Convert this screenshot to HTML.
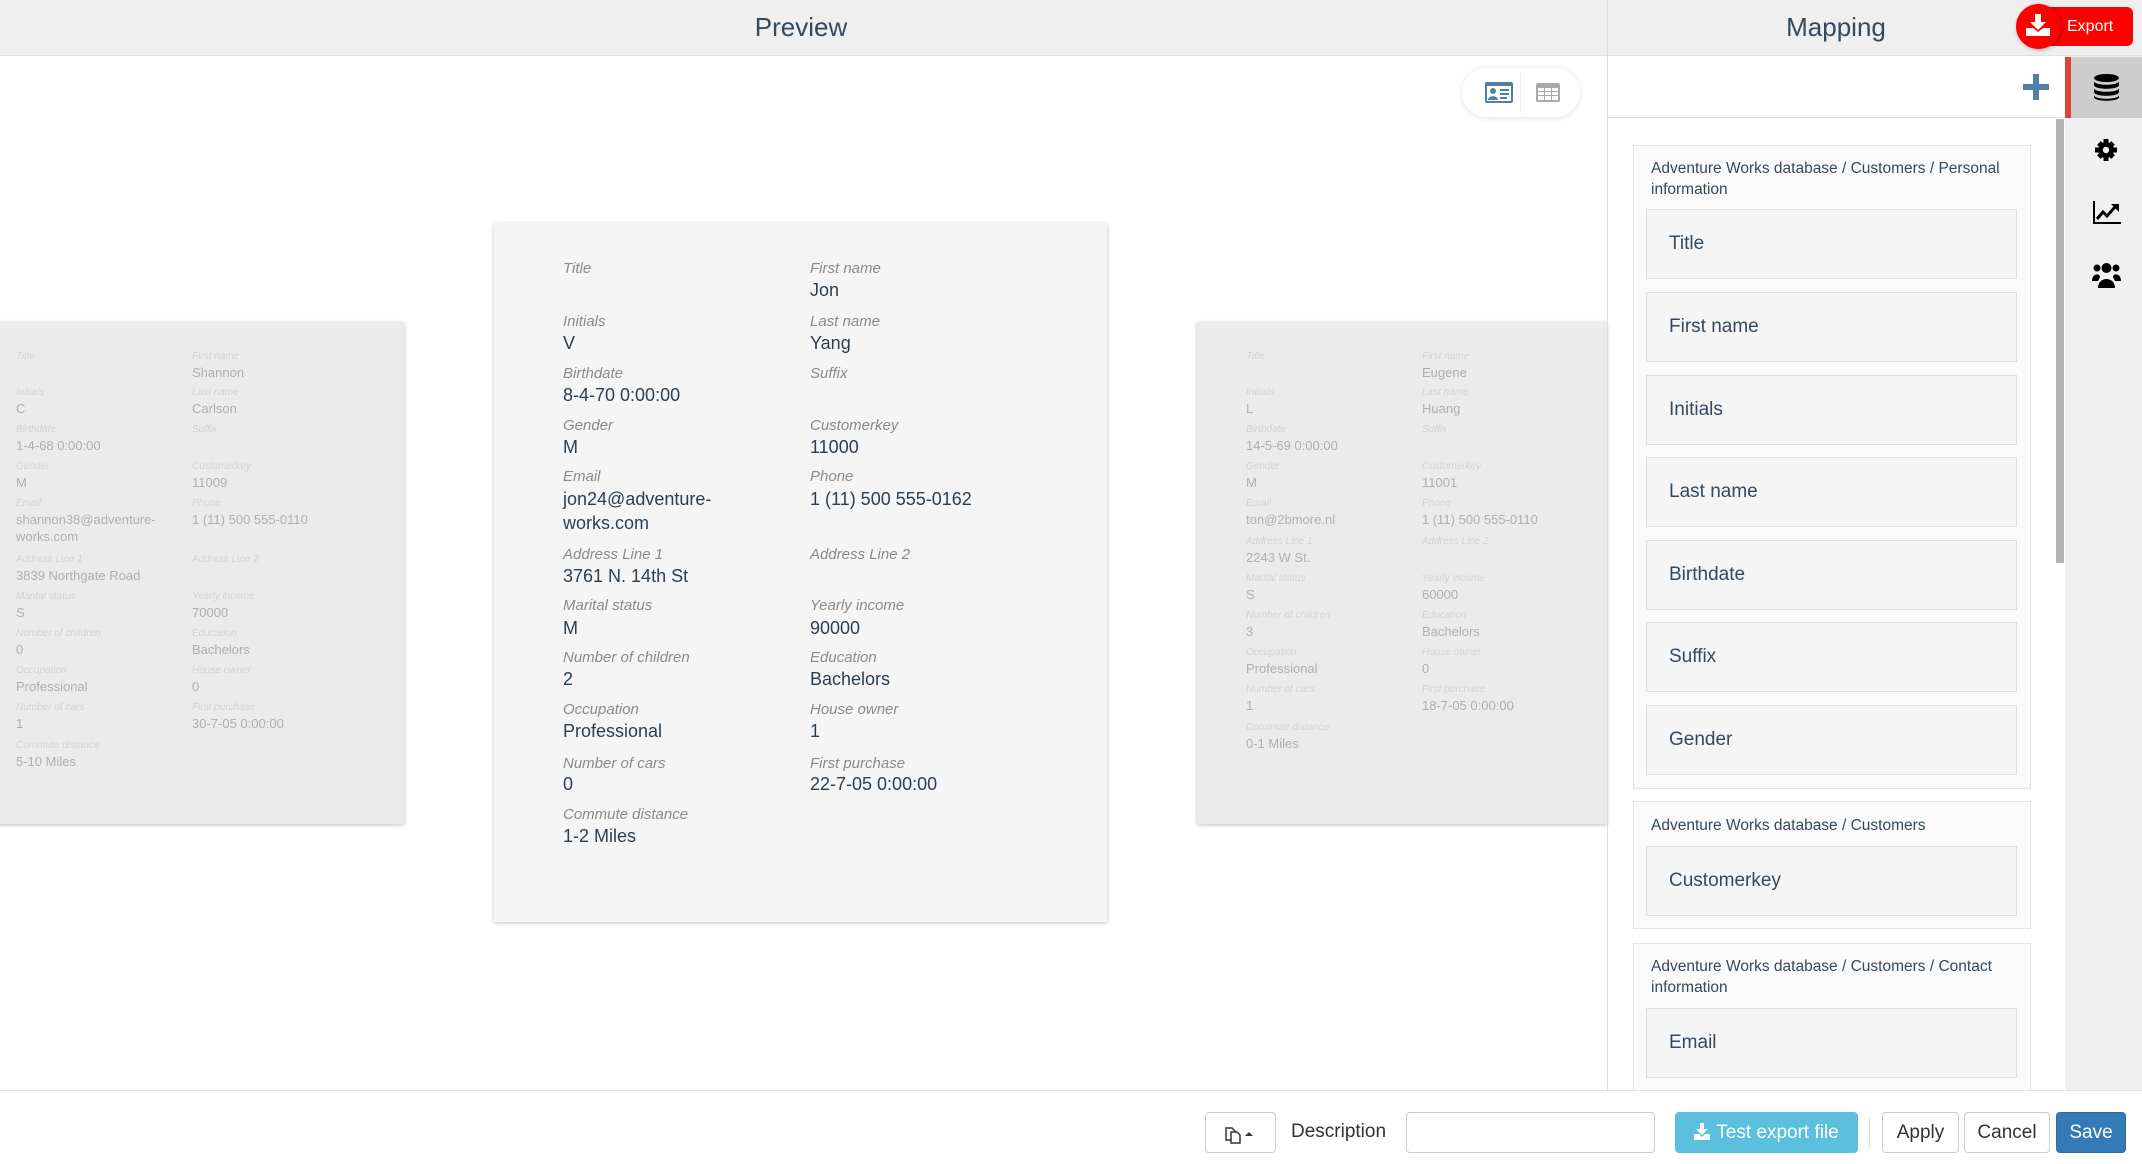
<!DOCTYPE html>
<html><head><meta charset="utf-8"><style>
*{box-sizing:border-box;margin:0;padding:0}
body{width:2142px;height:1164px;position:relative;overflow:hidden;background:#fff;font-family:"Liberation Sans",sans-serif;color:#2c3e50}
.a{position:absolute;white-space:nowrap}
.hdr{position:absolute;top:0;height:56px;background:#efefef;border-bottom:1px solid #e0e0e0}
.ttl{position:absolute;top:12px;font-size:26px;color:#34495e;transform:translateX(-50%)}
.card{position:absolute;background:#f5f5f5;box-shadow:0 1px 4px rgba(0,0,0,.25)}
.l{position:absolute;font-style:italic;font-size:15px;color:#8a8a8a;line-height:18px;white-space:nowrap}
.v{position:absolute;font-size:18px;color:#2c3e50;line-height:24px;white-space:nowrap}
.side{background:#ebebeb}
.sl{position:absolute;font-style:italic;font-size:10px;color:#d2d2d2;line-height:12px;white-space:nowrap}
.sv{position:absolute;font-size:13px;color:#aeaeae;line-height:17px;white-space:nowrap}
.grp{position:absolute;left:1633px;width:398px;background:#fafafa;border:1px solid #e3e3e3}
.gt{position:absolute;left:17px;font-size:15.5px;color:#34495e;line-height:21px;width:370px;white-space:normal}
.fld{position:absolute;left:1646px;width:371px;height:70px;background:#f5f5f5;border:1px solid #dedede;font-size:19px;color:#34495e;line-height:68px;padding-left:22px}
.btn{position:absolute;top:1112px;height:41px;border:1px solid #ccc;border-radius:4px;background:#fff;font-size:19px;line-height:39px;text-align:center;color:#333}
</style></head><body>
<div class="hdr" style="left:0;width:1607px"></div>
<div class="hdr" style="left:1607px;width:535px;border-left:1px solid #ddd"></div>
<div class="ttl" style="left:801px">Preview</div>
<div class="ttl" style="left:1836px">Mapping</div>
<div class="a" style="left:2030px;top:7px;width:103px;height:39px;background:#ff0000;border-radius:6px"></div>
<div class="a" style="left:2067px;top:17px;color:#fff;font-size:16px;line-height:20px">Export</div>
<div class="a" style="left:2016px;top:4px;width:45px;height:45px;border-radius:50%;background:#ff0000;box-shadow:1px 1px 4px rgba(0,0,0,.3)"></div>
<svg class="a" style="left:2026px;top:14px" width="24" height="22" viewBox="0 0 24 22"><path d="M9 0h6v8h5l-8 8-8-8h5z" fill="#fff"/><path d="M0 14h7l5 4 5-4h7v8H0z" fill="#fff"/></svg>

<div class="a" style="left:1462px;top:68px;width:118px;height:49px;background:#fff;border-radius:25px;box-shadow:0 1px 6px rgba(0,0,0,.12)"></div>
<div class="a" style="left:1520px;top:72px;width:1px;height:41px;background:#eee"></div>
<svg class="a" style="left:1485px;top:82px" width="28" height="21" viewBox="0 0 28 21"><rect x="0" y="0" width="28" height="21" rx="2" fill="#4f7ea6"/><rect x="2" y="4" width="24" height="15" fill="#fff"/><circle cx="8" cy="9" r="3" fill="#4f7ea6"/><path d="M3 18c0-5 10-5 10 0z" fill="#4f7ea6"/><rect x="15" y="7" width="9" height="2" fill="#4f7ea6"/><rect x="15" y="11" width="9" height="2" fill="#4f7ea6"/><rect x="15" y="15" width="7" height="2" fill="#4f7ea6"/></svg>
<svg class="a" style="left:1536px;top:83px" width="24" height="19" viewBox="0 0 24 19"><rect width="24" height="19" rx="2" fill="#aaa"/><g fill="#fff"><rect x="2" y="5" width="6" height="3"/><rect x="9" y="5" width="6" height="3"/><rect x="16" y="5" width="6" height="3"/><rect x="2" y="9" width="6" height="3"/><rect x="9" y="9" width="6" height="3"/><rect x="16" y="9" width="6" height="3"/><rect x="2" y="13" width="6" height="4"/><rect x="9" y="13" width="6" height="4"/><rect x="16" y="13" width="6" height="4"/></g></svg>

<div class="card side" style="left:-10px;top:322px;width:414px;height:502px"></div>
<div class="sl" style="left:16px;top:351px">Title</div><div class="sl" style="left:192px;top:351px">First name</div><div class="sv" style="left:192px;top:364px">Shannon</div>
<div class="sl" style="left:16px;top:387px">Initials</div><div class="sl" style="left:192px;top:387px">Last name</div><div class="sv" style="left:16px;top:400px">C</div><div class="sv" style="left:192px;top:400px">Carlson</div>
<div class="sl" style="left:16px;top:424px">Birthdate</div><div class="sl" style="left:192px;top:424px">Suffix</div><div class="sv" style="left:16px;top:437px">1-4-68 0:00:00</div>
<div class="sl" style="left:16px;top:461px">Gender</div><div class="sl" style="left:192px;top:461px">Customerkey</div><div class="sv" style="left:16px;top:474px">M</div><div class="sv" style="left:192px;top:474px">11009</div>
<div class="sl" style="left:16px;top:498px">Email</div><div class="sl" style="left:192px;top:498px">Phone</div><div class="sv" style="left:16px;top:511px">shannon38@adventure-<br>works.com</div><div class="sv" style="left:192px;top:511px">1 (11) 500 555-0110</div>
<div class="sl" style="left:16px;top:554px">Address Line 1</div><div class="sl" style="left:192px;top:554px">Address Line 2</div><div class="sv" style="left:16px;top:567px">3839 Northgate Road</div>
<div class="sl" style="left:16px;top:591px">Marital status</div><div class="sl" style="left:192px;top:591px">Yearly income</div><div class="sv" style="left:16px;top:604px">S</div><div class="sv" style="left:192px;top:604px">70000</div>
<div class="sl" style="left:16px;top:628px">Number of children</div><div class="sl" style="left:192px;top:628px">Education</div><div class="sv" style="left:16px;top:641px">0</div><div class="sv" style="left:192px;top:641px">Bachelors</div>
<div class="sl" style="left:16px;top:665px">Occupation</div><div class="sl" style="left:192px;top:665px">House owner</div><div class="sv" style="left:16px;top:678px">Professional</div><div class="sv" style="left:192px;top:678px">0</div>
<div class="sl" style="left:16px;top:702px">Number of cars</div><div class="sl" style="left:192px;top:702px">First purchase</div><div class="sv" style="left:16px;top:715px">1</div><div class="sv" style="left:192px;top:715px">30-7-05 0:00:00</div>
<div class="sl" style="left:16px;top:740px">Commute distance</div><div class="sv" style="left:16px;top:753px">5-10 Miles</div>

<div class="card side" style="left:1197px;top:322px;width:410px;height:502px"></div>
<div class="sl" style="left:1246px;top:351px">Title</div><div class="sl" style="left:1422px;top:351px">First name</div><div class="sv" style="left:1422px;top:364px">Eugene</div>
<div class="sl" style="left:1246px;top:387px">Initials</div><div class="sl" style="left:1422px;top:387px">Last name</div><div class="sv" style="left:1246px;top:400px">L</div><div class="sv" style="left:1422px;top:400px">Huang</div>
<div class="sl" style="left:1246px;top:424px">Birthdate</div><div class="sl" style="left:1422px;top:424px">Suffix</div><div class="sv" style="left:1246px;top:437px">14-5-69 0:00:00</div>
<div class="sl" style="left:1246px;top:461px">Gender</div><div class="sl" style="left:1422px;top:461px">Customerkey</div><div class="sv" style="left:1246px;top:474px">M</div><div class="sv" style="left:1422px;top:474px">11001</div>
<div class="sl" style="left:1246px;top:498px">Email</div><div class="sl" style="left:1422px;top:498px">Phone</div><div class="sv" style="left:1246px;top:511px">ton@2bmore.nl</div><div class="sv" style="left:1422px;top:511px">1 (11) 500 555-0110</div>
<div class="sl" style="left:1246px;top:536px">Address Line 1</div><div class="sl" style="left:1422px;top:536px">Address Line 2</div><div class="sv" style="left:1246px;top:549px">2243 W St.</div>
<div class="sl" style="left:1246px;top:573px">Marital status</div><div class="sl" style="left:1422px;top:573px">Yearly income</div><div class="sv" style="left:1246px;top:586px">S</div><div class="sv" style="left:1422px;top:586px">60000</div>
<div class="sl" style="left:1246px;top:610px">Number of children</div><div class="sl" style="left:1422px;top:610px">Education</div><div class="sv" style="left:1246px;top:623px">3</div><div class="sv" style="left:1422px;top:623px">Bachelors</div>
<div class="sl" style="left:1246px;top:647px">Occupation</div><div class="sl" style="left:1422px;top:647px">House owner</div><div class="sv" style="left:1246px;top:660px">Professional</div><div class="sv" style="left:1422px;top:660px">0</div>
<div class="sl" style="left:1246px;top:684px">Number of cars</div><div class="sl" style="left:1422px;top:684px">First purchase</div><div class="sv" style="left:1246px;top:697px">1</div><div class="sv" style="left:1422px;top:697px">18-7-05 0:00:00</div>
<div class="sl" style="left:1246px;top:722px">Commute distance</div><div class="sv" style="left:1246px;top:735px">0-1 Miles</div>
<div class="a" style="left:1607px;top:56px;width:1px;height:1035px;background:#ddd"></div>

<div class="card" style="left:494px;top:223px;width:613px;height:699px"></div>
<div class="l" style="left:563px;top:260px">Title</div><div class="l" style="left:810px;top:260px">First name</div><div class="v" style="left:810px;top:278px">Jon</div>
<div class="l" style="left:563px;top:313px">Initials</div><div class="l" style="left:810px;top:313px">Last name</div><div class="v" style="left:563px;top:331px">V</div><div class="v" style="left:810px;top:331px">Yang</div>
<div class="l" style="left:563px;top:365px">Birthdate</div><div class="l" style="left:810px;top:365px">Suffix</div><div class="v" style="left:563px;top:383px">8-4-70 0:00:00</div>
<div class="l" style="left:563px;top:417px">Gender</div><div class="l" style="left:810px;top:417px">Customerkey</div><div class="v" style="left:563px;top:435px">M</div><div class="v" style="left:810px;top:435px">11000</div>
<div class="l" style="left:563px;top:468px">Email</div><div class="l" style="left:810px;top:468px">Phone</div><div class="v" style="left:563px;top:487px">jon24@adventure-<br>works.com</div><div class="v" style="left:810px;top:487px">1 (11) 500 555-0162</div>
<div class="l" style="left:563px;top:546px">Address Line 1</div><div class="l" style="left:810px;top:546px">Address Line 2</div><div class="v" style="left:563px;top:564px">3761 N. 14th St</div>
<div class="l" style="left:563px;top:597px">Marital status</div><div class="l" style="left:810px;top:597px">Yearly income</div><div class="v" style="left:563px;top:616px">M</div><div class="v" style="left:810px;top:616px">90000</div>
<div class="l" style="left:563px;top:649px">Number of children</div><div class="l" style="left:810px;top:649px">Education</div><div class="v" style="left:563px;top:667px">2</div><div class="v" style="left:810px;top:667px">Bachelors</div>
<div class="l" style="left:563px;top:701px">Occupation</div><div class="l" style="left:810px;top:701px">House owner</div><div class="v" style="left:563px;top:719px">Professional</div><div class="v" style="left:810px;top:719px">1</div>
<div class="l" style="left:563px;top:755px">Number of cars</div><div class="l" style="left:810px;top:755px">First purchase</div><div class="v" style="left:563px;top:772px">0</div><div class="v" style="left:810px;top:772px">22-7-05 0:00:00</div>
<div class="l" style="left:563px;top:806px">Commute distance</div><div class="v" style="left:563px;top:824px">1-2 Miles</div>

<div class="a" style="left:1608px;top:117px;width:457px;height:1px;background:#ddd"></div>
<svg class="a" style="left:2023px;top:74px" width="26" height="26" viewBox="0 0 26 26"><path d="M10 0h6v10h10v6H16v10h-6V16H0v-6h10z" fill="#4f7ea6"/></svg>
<div class="a" style="left:2065px;top:56px;width:77px;height:1035px;background:#f0f0f0"></div>
<div class="a" style="left:2065px;top:57px;width:77px;height:61px;background:#cdcdcd"></div>
<div class="a" style="left:2065px;top:57px;width:6px;height:61px;background:#db4437"></div>
<svg class="a" style="left:2094px;top:74px" width="25" height="27" viewBox="0 0 25 27"><ellipse cx="12.5" cy="4" rx="12.5" ry="4" fill="#000"/><path d="M0 7c0 5 25 5 25 0v4c0 5-25 5-25 0z M0 14c0 5 25 5 25 0v4c0 5-25 5-25 0z M0 21c0 5 25 5 25 0v2c0 5-25 5-25 0z" fill="#000"/></svg>
<svg class="a" style="left:2095px;top:139px" width="22" height="22" viewBox="0 0 22 22"><g fill="#000"><circle cx="11" cy="11" r="8"/><rect x="8.5" y="0" width="5" height="22"/><rect x="0" y="8.5" width="22" height="5"/><rect x="8.5" y="1" width="5" height="20" transform="rotate(45 11 11)"/><rect x="8.5" y="1" width="5" height="20" transform="rotate(-45 11 11)"/></g><circle cx="11" cy="11" r="3.2" fill="#f0f0f0"/></svg>
<svg class="a" style="left:2093px;top:201px" width="28" height="23" viewBox="0 0 28 23"><path d="M1 0v22h27" stroke="#000" stroke-width="2" fill="none"/><path d="M4 18l6-7 4 4 8-9" stroke="#000" stroke-width="3" fill="none"/><path d="M18 3h8v8z" fill="#000"/></svg>
<svg class="a" style="left:2092px;top:262px" width="29" height="26" viewBox="0 0 29 26"><g fill="#000"><circle cx="14.5" cy="6" r="5"/><circle cx="5" cy="6" r="3.5"/><circle cx="24" cy="6" r="3.5"/><path d="M6 26c0-12 17-12 17 0z"/><path d="M0 19c0-8 8-8 8-4l-2 4z"/><path d="M29 19c0-8-8-8-8-4l2 4z"/></g></svg>
<div class="a" style="left:2056px;top:119px;width:8px;height:444px;background:#b4b4b4"></div>

<div class="grp" style="top:145px;height:644px"><div class="gt" style="top:12px">Adventure Works database / Customers / Personal information</div></div>
<div class="fld" style="top:209px">Title</div>
<div class="fld" style="top:292px">First name</div>
<div class="fld" style="top:375px">Initials</div>
<div class="fld" style="top:457px">Last name</div>
<div class="fld" style="top:540px">Birthdate</div>
<div class="fld" style="top:622px">Suffix</div>
<div class="fld" style="top:705px">Gender</div>
<div class="grp" style="top:801px;height:128px"><div class="gt" style="top:13px">Adventure Works database / Customers</div></div>
<div class="fld" style="top:846px">Customerkey</div>
<div class="grp" style="top:943px;height:160px"><div class="gt" style="top:12px">Adventure Works database / Customers / Contact information</div></div>
<div class="fld" style="top:1008px">Email</div>

<div class="a" style="left:0;top:1090px;width:2142px;height:74px;background:#fff;border-top:1px solid #e2e2e2"></div>
<div class="btn" style="left:1205px;width:71px"><svg style="position:absolute;left:18px;top:11px" width="30" height="20" viewBox="0 0 30 20"><path d="M2 4h6l3 3v9H2z" fill="none" stroke="#333" stroke-width="1.5"/><path d="M7 8h6l3 3v8H7z" fill="#fff" stroke="#333" stroke-width="1.5"/><path d="M21 12l4-4 4 4z" fill="#333"/></svg></div>
<div class="a" style="left:1291px;top:1121px;font-size:19px;color:#333">Description</div>
<div class="a" style="left:1406px;top:1112px;width:249px;height:41px;border:1px solid #ccc;border-radius:4px"></div>
<div class="btn" style="left:1675px;width:183px;background:#5bc0de;border-color:#5bc0de;color:#fff"><svg style="vertical-align:-2px;margin-right:6px" width="16" height="17" viewBox="0 0 16 17"><path d="M6 0h4v6h4l-6 6-6-6h4z M0 11h5l3 3 3-3h5v6H0z" fill="#fff"/></svg>Test export file</div>
<div class="a" style="left:1869px;top:1118px;width:1px;height:30px;background:#ddd"></div>
<div class="btn" style="left:1882px;width:77px">Apply</div>
<div class="btn" style="left:1964px;width:86px">Cancel</div>
<div class="btn" style="left:2056px;width:70px;background:#337ab7;border-color:#2e6da4;color:#fff">Save</div>
</body></html>
